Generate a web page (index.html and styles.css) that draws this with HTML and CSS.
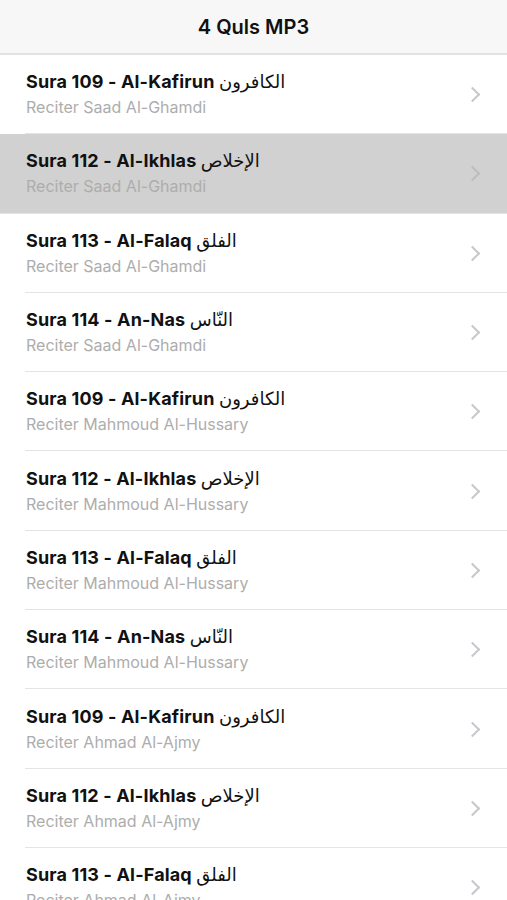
FILE: index.html
```html
<!DOCTYPE html>
<html lang="en">
<head>
  <meta charset="UTF-8">
  <title>4 Quls MP3</title>
  <link rel="stylesheet" href="styles.css">
</head>
<body>
  <div class="navbar">4 Quls MP3</div>

  <ul class="list">
    <!-- Saad Al-Ghamdi -->
    <li class="row">
      <div class="text"><div class="title">Sura 109 - Al-Kafirun <span class="ar">الكافرون</span></div><div class="sub">Reciter Saad Al-Ghamdi</div></div>
      <span class="chevron"></span>
    </li>
    <li class="row selected">
      <div class="text"><div class="title">Sura 112 - Al-Ikhlas <span class="ar">الإخلاص</span></div><div class="sub">Reciter Saad Al-Ghamdi</div></div>
      <span class="chevron"></span>
    </li>
    <li class="row">
      <div class="text"><div class="title">Sura 113 - Al-Falaq <span class="ar">الفلق</span></div><div class="sub">Reciter Saad Al-Ghamdi</div></div>
      <span class="chevron"></span>
    </li>
    <li class="row">
      <div class="text"><div class="title">Sura 114 - An-Nas <span class="ar">النّاس</span></div><div class="sub">Reciter Saad Al-Ghamdi</div></div>
      <span class="chevron"></span>
    </li>

    <!-- Mahmoud Al-Hussary -->
    <li class="row">
      <div class="text"><div class="title">Sura 109 - Al-Kafirun <span class="ar">الكافرون</span></div><div class="sub">Reciter Mahmoud Al-Hussary</div></div>
      <span class="chevron"></span>
    </li>
    <li class="row">
      <div class="text"><div class="title">Sura 112 - Al-Ikhlas <span class="ar">الإخلاص</span></div><div class="sub">Reciter Mahmoud Al-Hussary</div></div>
      <span class="chevron"></span>
    </li>
    <li class="row">
      <div class="text"><div class="title">Sura 113 - Al-Falaq <span class="ar">الفلق</span></div><div class="sub">Reciter Mahmoud Al-Hussary</div></div>
      <span class="chevron"></span>
    </li>
    <li class="row">
      <div class="text"><div class="title">Sura 114 - An-Nas <span class="ar">النّاس</span></div><div class="sub">Reciter Mahmoud Al-Hussary</div></div>
      <span class="chevron"></span>
    </li>

    <!-- Ahmad Al-Ajmy -->
    <li class="row">
      <div class="text"><div class="title">Sura 109 - Al-Kafirun <span class="ar">الكافرون</span></div><div class="sub">Reciter Ahmad Al-Ajmy</div></div>
      <span class="chevron"></span>
    </li>
    <li class="row">
      <div class="text"><div class="title">Sura 112 - Al-Ikhlas <span class="ar">الإخلاص</span></div><div class="sub">Reciter Ahmad Al-Ajmy</div></div>
      <span class="chevron"></span>
    </li>
    <li class="row">
      <div class="text"><div class="title">Sura 113 - Al-Falaq <span class="ar">الفلق</span></div><div class="sub">Reciter Ahmad Al-Ajmy</div></div>
      <span class="chevron"></span>
    </li>
    <li class="row">
      <div class="text"><div class="title">Sura 114 - An-Nas <span class="ar">النّاس</span></div><div class="sub">Reciter Ahmad Al-Ajmy</div></div>
      <span class="chevron"></span>
    </li>
  </ul>
</body>
</html>
```

FILE: styles.css
```css
body {
  margin: 0;
  font-family: Inter, "DejaVu Sans", sans-serif;
  background: white;
  overflow: hidden;
}
.navbar {
  height: 53px;
  background: #f7f7f7;
  border-bottom: 2px solid #e2e2e2;
  display: flex;
  align-items: center;
  justify-content: center;
  font-size: 20px;
  font-weight: 600;
  color: #111;
}
.list {
  list-style: none;
  margin: 0;
  padding: 0;
}
.row {
  height: 79.3px;
  box-sizing: border-box;
  display: flex;
  align-items: center;
  padding: 0 25px 0 26px;
  position: relative;
}
.row::after {
  content: "";
  position: absolute;
  left: 25px;
  right: 0;
  bottom: 0;
  height: 1px;
  background: #e4e4e4;
}
.row.selected {
  background: #d1d1d1;
}
.row.selected::after {
  left: 0;
}
.text {
  flex: 1;
}
.title {
  font-size: 18px;
  font-weight: 700;
  letter-spacing: 0.15px;
  color: #111;
  line-height: 22px;
}
.ar {
  font-family: "DejaVu Sans", sans-serif;
  font-weight: 400;
  letter-spacing: 0;
}
.sub {
  font-size: 16px;
  color: #adadad;
  line-height: 22px;
  margin-top: 3px;
}
.chevron {
  width: 9px;
  height: 9px;
  border-top: 2px solid #c7c7cc;
  border-right: 2px solid #c7c7cc;
  transform: rotate(45deg);
  margin-right: 4px;
}
.selected .chevron {
  border-color: #bdbdbd;
}
```
